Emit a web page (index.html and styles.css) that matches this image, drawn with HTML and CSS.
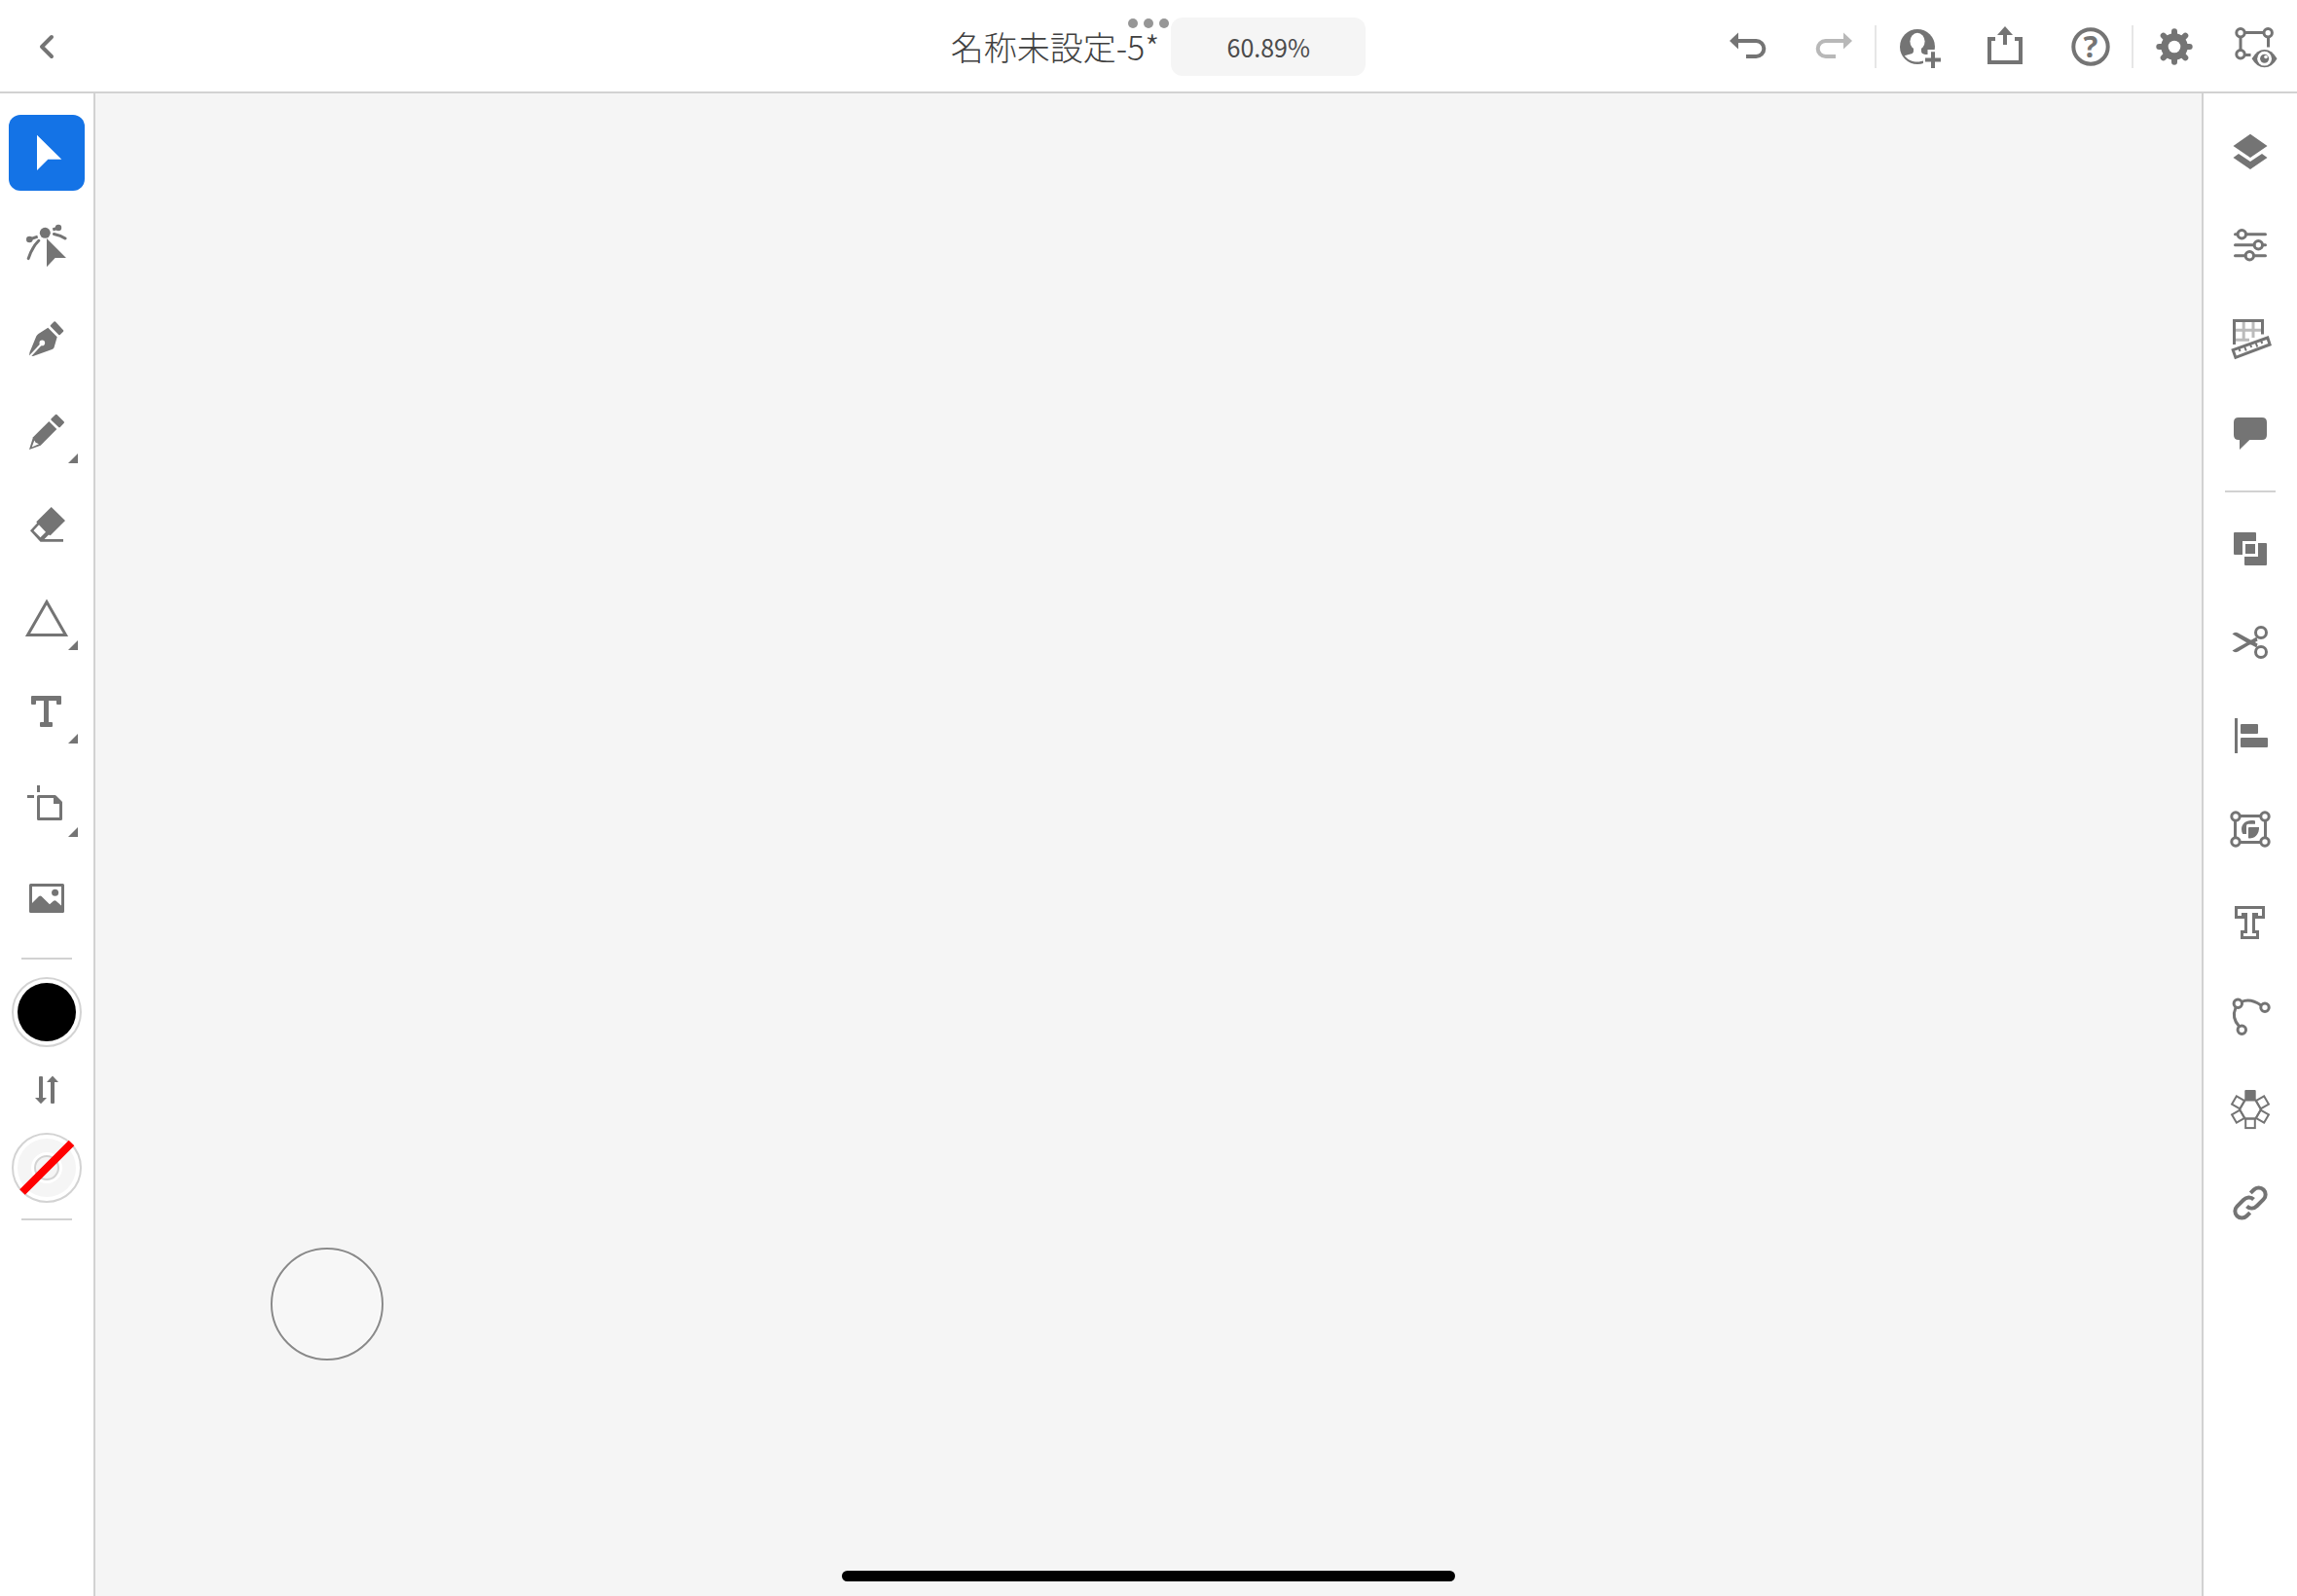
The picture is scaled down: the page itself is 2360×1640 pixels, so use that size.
FILE: index.html
```html
<!DOCTYPE html>
<html lang="ja">
<head>
<meta charset="utf-8">
<meta name="viewport" content="width=device-width, initial-scale=1">
<title>名称未設定-5</title>
<link rel="stylesheet" href="styles.css">
</head>
<body>
<div class="app">
  <header class="topbar">
    <div class="topbar-start">
      <button class="back" type="button" aria-label="戻る">
        <svg class="icon" viewBox="0 0 64 64"><path class="line-thick round" d="M37 22L27 32L37 42"/></svg>
      </button>
    </div>
    <div class="document">
      <h1 class="document-name">名称未設定-5*</h1>
      <button class="zoom-level" type="button">60.89%</button>
    </div>
    <div class="actions">
      <button class="action" type="button" aria-label="取り消し">
        <svg class="icon" viewBox="0 0 64 64"><path d="M13 26L22 17.5V34.5Z"/><path class="line-thick" d="M20 26H40.3A8 8 0 0 1 40.3 42H30"/></svg>
      </button>
      <button class="action is-disabled" type="button" aria-label="やり直し" disabled>
        <svg class="icon" viewBox="0 0 64 64"><path d="M51 26L42 17.5V34.5Z"/><path class="line-thick" d="M44 26H23.7A8 8 0 0 0 23.7 42H34"/></svg>
      </button>
      <span class="separator"></span>
      <button class="action" type="button" aria-label="招待">
        <svg class="icon" viewBox="0 0 64 64"><circle cx="30" cy="32" r="18"/><ellipse class="knock" cx="30" cy="26.6" rx="7.6" ry="8.8"/><path class="knock" d="M26 33V36.500C26 39 24 39.500 21 40L16.800 41.200C20 45.500 25 47.500 30 47.500S39 45.500 42 41L38 40C35.500 39.500 34 39 34 36.500V33Z"/><path class="knock-line" d="M46 35V56M36 45.500H56"/><path class="line-thick" d="M46 37.300V54M38 45.500H54"/></svg>
      </button>
      <button class="action" type="button" aria-label="共有">
        <svg class="icon" viewBox="0 0 64 64"><path d="M32 11L40 20H24Z"/><path class="line-thick" d="M32 19V30M22 24H16V48H48V24H42"/></svg>
      </button>
      <button class="action" type="button" aria-label="ヘルプ">
        <svg class="icon" viewBox="0 0 64 64"><circle class="line-thick" cx="32" cy="32" r="17.700"/><text class="question" x="32" y="43">?</text></svg>
      </button>
      <span class="separator"></span>
      <button class="action action-narrow" type="button" aria-label="設定">
        <svg class="icon" viewBox="0 0 64 64"><g class="teeth"><path d="M32 16.300V47.700M16.300 32H47.700M20.700 20.700L43.300 43.300M43.300 20.700L20.700 43.300"/></g><circle cx="32" cy="32" r="13.700"/><circle class="knock" cx="32" cy="32" r="6.300"/></svg>
      </button>
      <button class="action action-narrow" type="button" aria-label="表示">
        <svg class="icon" viewBox="0 0 64 64"><path class="line" d="M20 17.500H40M16 22V36M44.500 22V32.500M20 40.500H26.500"/><circle class="line" cx="16" cy="17.800" r="4.200"/><circle class="line" cx="44.200" cy="17.800" r="4.200"/><circle class="line" cx="16" cy="39.800" r="4.200"/><path d="M27.600 44.300Q33 35 40.600 35T53.500 44.300Q48.500 53.300 40.600 53.300T27.600 44.300Z"/><circle class="knock" cx="40.600" cy="44.200" r="7.400"/><circle cx="40.600" cy="44.200" r="4.500"/><circle class="knock" cx="42" cy="42.500" r="1.800"/></svg>
      </button>
    </div>
    <span class="window-dots"><i></i><i></i><i></i></span>
  </header>

  <div class="workspace">
    <nav class="tools" aria-label="ツール">
      <button class="tool is-active" type="button" aria-label="選択"><svg viewBox="0 0 78 78"><path d="M29 20.700L54.300 45.700H40.300L29 57Z"/></svg></button>
      <button class="tool" type="button" aria-label="ダイレクト選択"><svg viewBox="0 0 78 78"><path d="M39 31L59 51H47.700L39 60.300Z"/><circle cx="37.300" cy="25.300" r="5.500"/><circle cx="21.300" cy="32" r="3.300"/><circle cx="51" cy="20" r="3.200"/><path class="line" d="M21.300 32L29.700 29.200M51 20L45.300 22"/><path class="line round" d="M20.200 51.600Q24 40 30.800 33.300M46.500 26.500Q53.600 28 58 31"/></svg></button>
      <button class="tool" type="button" aria-label="ペン"><svg viewBox="0 0 78 78"><path class="joined" d="M47.200 21.300L55.300 30L52 33.300L43.700 24.700Z"/><path d="M40.300 26.700L49.700 36.300L46.500 47.300Q46 48.500 44.500 49L25 56L21 55.500L21.500 52L28.300 35.500Q29 34 30.500 33Z"/><path class="knock-thin" d="M20.500 57.500L34 43"/><circle class="knock" cx="34.300" cy="42.400" r="2.800"/></svg></button>
      <button class="tool has-more" type="button" aria-label="鉛筆"><svg viewBox="0 0 78 78"><path class="joined" d="M48.700 20.700L56 28L52 32.300L44.300 25Z"/><path d="M41.300 27L49.300 35L32.700 51.700L21 56L25 43.300Z"/><path class="knock" d="M26.300 46.500L27.600 48.800L31 50.300L23.700 53.500Z"/></svg></button>
      <button class="tool" type="button" aria-label="消しゴム"><svg viewBox="0 0 78 78"><path d="M43.700 19L58 33L42.700 48.300L41 47.600L36.600 52H56V54.700H32.500L22 43.300L29.200 35.600L28.300 34.300Z"/><path class="knock" d="M31 37.300L38 44.800L32.500 50.300L25.500 43.300Z"/></svg></button>
      <button class="tool has-more" type="button" aria-label="シェイプ"><svg viewBox="0 0 78 78"><path class="line" d="M39 20.500L58.500 54.500H19.500Z"/></svg></button>
      <button class="tool has-more" type="button" aria-label="文字"><svg viewBox="0 0 78 78"><path d="M24 21H53Q54 21 54 22V29Q54 30 53 30H50Q49 30 49 29V26H41V48H44Q45 48 45 49V52Q45 53 44 53H33Q32 53 32 52V49Q32 48 33 48H36V26H28V29Q28 30 27 30H24Q23 30 23 29V22Q23 21 24 21Z"/></svg></button>
      <button class="tool has-more" type="button" aria-label="アートボード"><svg viewBox="0 0 78 78"><path class="line" d="M30.500 17V24M19 28.500H26"/><path class="line joined-line" d="M30.500 28.500H47.500L53.500 34.500V51.500H30.500Z"/><path d="M46 28H48L54 34V36H46Z"/></svg></button>
      <button class="tool" type="button" aria-label="画像"><svg viewBox="0 0 78 78"><path class="line joined-line" d="M22.500 23.500H55.500V50.500H22.500Z"/><circle cx="47.600" cy="31.300" r="3.500"/><path d="M23 43L31 35Q32.300 33.800 33.600 35L42 43.300L46 39.800Q47.300 38.700 48.600 39.800L55 45.500V51H23Z"/></svg></button>
      <span class="divider divider-start"></span>
      <button class="swatch" type="button" aria-label="塗り"><svg viewBox="0 0 72 72"><circle class="swatch-rim" cx="36" cy="36" r="35"/><circle class="swatch-fill" cx="36" cy="36" r="30"/></svg></button>
      <button class="swap" type="button" aria-label="塗りと線を入れ替え"><svg viewBox="0 0 52 52"><path d="M18 13Q18 12 19 12H21Q22 12 22 13V34H26L20 40.300L14 34H18ZM30 18H26L32 11.500L38 18H34V39Q34 40 33 40H31Q30 40 30 39Z"/></svg></button>
      <button class="swatch" type="button" aria-label="線なし"><svg viewBox="0 0 72 72"><circle class="swatch-rim" cx="36" cy="36" r="35"/><circle class="swatch-empty" cx="36" cy="36" r="30"/><circle class="knock" cx="36" cy="36" r="16"/><circle class="swatch-core" cx="36" cy="36" r="12"/><path class="slash" d="M11 61L61.500 10.500"/></svg></button>
      <span class="divider divider-end"></span>
    </nav>

    <main class="canvas">
      <button class="touch-shortcut" type="button" aria-label="タッチショートカット"></button>
    </main>

    <aside class="panels" aria-label="パネル">
      <button class="panel" type="button" aria-label="レイヤー"><svg class="icon" viewBox="0 0 64 64"><path d="M32 13.700L49.500 26L32 38L14.500 26ZM14.500 38L20 34L32 42L44 34L49.500 38L32 50Z"/></svg></button>
      <button class="panel" type="button" aria-label="プロパティ"><svg class="icon" viewBox="0 0 64 64"><path class="line round" d="M16.500 20.700H18.500M28 20.700H47.500M16.500 31.700H36M45.500 31.700H47.500M16.500 42.700H27M36 42.700H47.500"/><circle class="line" cx="23.300" cy="20.700" r="4.200"/><circle class="line" cx="40.300" cy="31.700" r="4.200"/><circle class="line" cx="31.300" cy="42.700" r="4.200"/></svg></button>
      <button class="panel" type="button" aria-label="精度"><svg class="icon" viewBox="0 0 64 64"><path class="line faint" d="M25.200 15V34.500M35 15V31M17 23.200H43M17 33.200H31"/><path class="line" d="M15.500 38V13.500H44.500V27.500"/><path class="line" d="M14.200 43.700L49.800 31L52.100 38L16.900 51.400Z"/><path class="line-fine" d="M20.300 42L21.600 45M26 40L27.800 44.500M32 38L33.200 41M37.500 36L39.300 40.500M43 34L44.300 37"/></svg></button>
      <button class="panel" type="button" aria-label="コメント"><svg class="icon" viewBox="0 0 64 64"><path d="M20 17H44Q49 17 49 22V35Q49 40 44 40H31.300L21 50V40H20Q15 40 15 35V22Q15 17 20 17Z"/></svg></button>
      <span class="divider"></span>
      <button class="panel" type="button" aria-label="シェイプを結合"><svg class="icon" viewBox="0 0 64 64"><path d="M16 15H37Q38 15 38 16V24H24V38H16Q15 38 15 37V16Q15 15 16 15ZM40 26H48Q49 26 49 27V48Q49 49 48 49H27Q26 49 26 48V40H40ZM27 27H37V37H27Z"/></svg></button>
      <button class="panel" type="button" aria-label="カット"><svg class="icon" viewBox="0 0 64 64"><path d="M13.500 23.500Q16 21 19 22.300L39.500 33.500L38.500 37.500L32 34L19 41.700Q16 43 13.500 40.500L38.500 26.500L39.500 30.500L32 34.500Z"/><circle class="line" cx="43" cy="22" r="5.500"/><circle class="line" cx="43" cy="42" r="5.500"/></svg></button>
      <button class="panel" type="button" aria-label="整列"><svg class="icon" viewBox="0 0 64 64"><path d="M16 14H19V50H16Z"/><rect x="22" y="20" width="18" height="10" rx="1"/><rect x="22" y="34" width="28" height="10" rx="1"/></svg></button>
      <button class="panel" type="button" aria-label="オブジェクト"><svg class="icon" viewBox="0 0 64 64"><path class="line" d="M21 18.500H43M21 45.500H43M16.500 23V41M47.500 23V41"/><circle class="line" cx="17" cy="19" r="4.200"/><circle class="line" cx="47" cy="19" r="4.200"/><circle class="line" cx="47" cy="45" r="4.200"/><circle class="line" cx="17" cy="45" r="4.200"/><path d="M37 26.800V23.500C29 21.500 23 26 23 32Q23 35 24.400 37H28V28.800A2 2 0 0 1 30 26.800ZM30 41.300V31A1 1 0 0 1 31 30H41A9.500 10.500 0 0 1 30 41.300Z"/></svg></button>
      <button class="panel" type="button" aria-label="テキスト"><svg class="icon" viewBox="0 0 64 64"><path class="line" d="M17.500 16.500H45.500V26.500H38.500V23.500H35.500V41.500H39.500V47.500H23.500V41.500H27.500V23.500H24.500V26.500H17.500Z"/></svg></button>
      <button class="panel" type="button" aria-label="パス"><svg class="icon" viewBox="0 0 64 64"><path class="line" d="M23 17.500Q32 13.500 43 21M17 23.500Q12.500 34 20.500 42.500"/><circle class="line" cx="19.300" cy="19.300" r="4.200"/><circle class="line" cx="47" cy="23.300" r="4.200"/><circle class="line" cx="23.300" cy="46.300" r="4.200"/></svg></button>
      <button class="panel" type="button" aria-label="リピート"><svg class="icon" viewBox="0 0 64 64"><rect x="26.300" y="12" width="11.400" height="11" rx="1"/><g class="petals"><path d="M37.500 22.500L43 32L37.500 41.500H26.500L21 32L26.500 22.500Z"/><rect x="27.200" y="41.500" width="9.600" height="9.600"/><rect x="27.200" y="41.500" width="9.600" height="9.600" transform="rotate(60 32 32)"/><rect x="27.200" y="41.500" width="9.600" height="9.600" transform="rotate(120 32 32)"/><rect x="27.200" y="41.500" width="9.600" height="9.600" transform="rotate(240 32 32)"/><rect x="27.200" y="41.500" width="9.600" height="9.600" transform="rotate(300 32 32)"/></g></svg></button>
      <button class="panel" type="button" aria-label="リンク"><svg class="icon" viewBox="0 0 64 64"><path class="link-line" d="M28.500 35.500C31.500 38.500 36 38 39 35L45.600 28.400A7 7 0 0 0 35.700 18.500L32.300 21.900M35.500 28.500C32.500 25.500 28 26 25 29L18.400 35.600A7 7 0 0 0 28.300 45.500L31.700 42.100"/></svg></button>
    </aside>
  </div>
  <div class="home-indicator"></div>
</div>
</body>
</html>
```
FILE: styles.css
```css
:root {
  --ink: #747474;
  --rule: #d2d2d2;
  --canvas: #f5f5f5;
}

* { box-sizing: border-box; }

body {
  margin: 0;
  background: #fff;
  color: #4b4b4b;
  font-family: "Noto Sans CJK JP", "Noto Sans", sans-serif;
}

button {
  display: flex;
  align-items: center;
  justify-content: center;
  flex: none;
  margin: 0;
  padding: 0;
  border: 0;
  background: none;
  color: inherit;
  font: inherit;
  cursor: pointer;
}

.app {
  position: relative;
  display: flex;
  flex-direction: column;
  min-height: 100vh;
}

/* Top bar */
.topbar {
  position: relative;
  display: grid;
  grid-template-columns: 1fr auto 1fr;
  align-items: center;
  height: 96px;
  border-bottom: 2px solid var(--rule);
}

.back { width: 96px; height: 96px; }

.document {
  display: flex;
  align-items: center;
  gap: 12px;
  margin-left: 20px;
}

.document-name {
  margin: 0;
  color: #404040;
  font-size: 34px;
  font-weight: 300;
  line-height: 48px;
  white-space: nowrap;
}

.zoom-level {
  width: 200px;
  height: 60px;
  border-radius: 12px;
  background: var(--canvas);
  font-size: 25px;
}

.actions {
  display: flex;
  align-items: center;
  justify-content: flex-end;
}

.action { width: 88px; height: 96px; }
.action-narrow { width: 84px; }

.separator {
  width: 2px;
  height: 44px;
  margin-left: -2px;
  background: #e6e6e6;
}

.window-dots {
  position: absolute;
  top: 19px;
  left: 50%;
  display: flex;
  gap: 6px;
  transform: translateX(-50%);
}

.window-dots i {
  width: 10px;
  height: 10px;
  border-radius: 50%;
  background: #969696;
}

/* Icons */
svg { display: block; fill: var(--ink); }
.icon { width: 64px; height: 64px; }
.line, .line-thick, .line-fine, .link-line { fill: none; stroke: var(--ink); stroke-width: 3; }
.line-thick, .link-line { stroke-width: 4; }
.line-fine { stroke-width: 2; }
.faint { stroke: #bbb; }
.round { stroke-linecap: round; stroke-linejoin: round; }
.joined { stroke: var(--ink); stroke-width: 2; stroke-linejoin: round; }
.joined-line { stroke-linejoin: round; }
.knock { fill: #fff; }
.knock-line { fill: none; stroke: #fff; stroke-width: 11; }
.knock-thin { fill: none; stroke: #fff; stroke-width: 2; }
.teeth { fill: none; stroke: var(--ink); stroke-width: 6; stroke-linecap: round; }
.petals { fill: none; stroke: var(--ink); stroke-width: 2; }
.question { font: 700 31px "Noto Sans", sans-serif; text-anchor: middle; }
.is-disabled .icon { fill: #b8b8b8; }
.is-disabled .line-thick { stroke: #b8b8b8; }

/* Workspace */
.workspace { display: flex; flex: 1; }

.tools {
  display: flex;
  flex: none;
  flex-direction: column;
  align-items: center;
  gap: 18px;
  width: 98px;
  padding-top: 22px;
  border-right: 2px solid var(--rule);
}

.tool {
  position: relative;
  width: 78px;
  height: 78px;
  border-radius: 12px;
}

.tool svg { width: 78px; height: 78px; }
.tool.is-active { background: #1473e6; }
.tool.is-active svg { fill: #fff; }

.has-more::after {
  content: "";
  position: absolute;
  right: 7px;
  bottom: 8px;
  width: 10px;
  height: 10px;
  background: var(--ink);
  clip-path: polygon(100% 0, 100% 100%, 0 100%);
}

.divider {
  flex: none;
  width: 52px;
  height: 2px;
  background: var(--rule);
}

.divider-start { margin-top: 2px; }
.divider-end { margin-top: -2px; }

.swatch, .swatch svg { width: 72px; height: 72px; }
.swap, .swap svg { width: 52px; height: 52px; }
.swatch-rim { fill: #fff; stroke: #d3d3d3; stroke-width: 2; }
.swatch-fill { fill: #000; }
.swatch-empty { fill: var(--canvas); }
.swatch-core { fill: var(--canvas); stroke: #d3d3d3; stroke-width: 2; }
.slash { fill: none; stroke: #f00; stroke-width: 8; }

.canvas {
  position: relative;
  flex: 1;
  background: var(--canvas);
}

.touch-shortcut {
  position: absolute;
  bottom: 242px;
  left: 180px;
  width: 116px;
  height: 116px;
  border: 2px solid #8a8a8a;
  border-radius: 50%;
  background: #f7f7f7;
  box-shadow: inset 0 0 0 1px #fff;
}

.panels {
  display: flex;
  flex: none;
  flex-direction: column;
  align-items: center;
  width: 98px;
  padding-top: 12px;
  border-left: 2px solid var(--rule);
}

.panel { width: 96px; height: 96px; }
.panels .divider { margin: 12px 0 10px; }

.home-indicator {
  position: absolute;
  bottom: 15px;
  left: 50%;
  width: 630px;
  height: 11px;
  border-radius: 6px;
  background: #000;
  transform: translateX(-50%);
}
```
